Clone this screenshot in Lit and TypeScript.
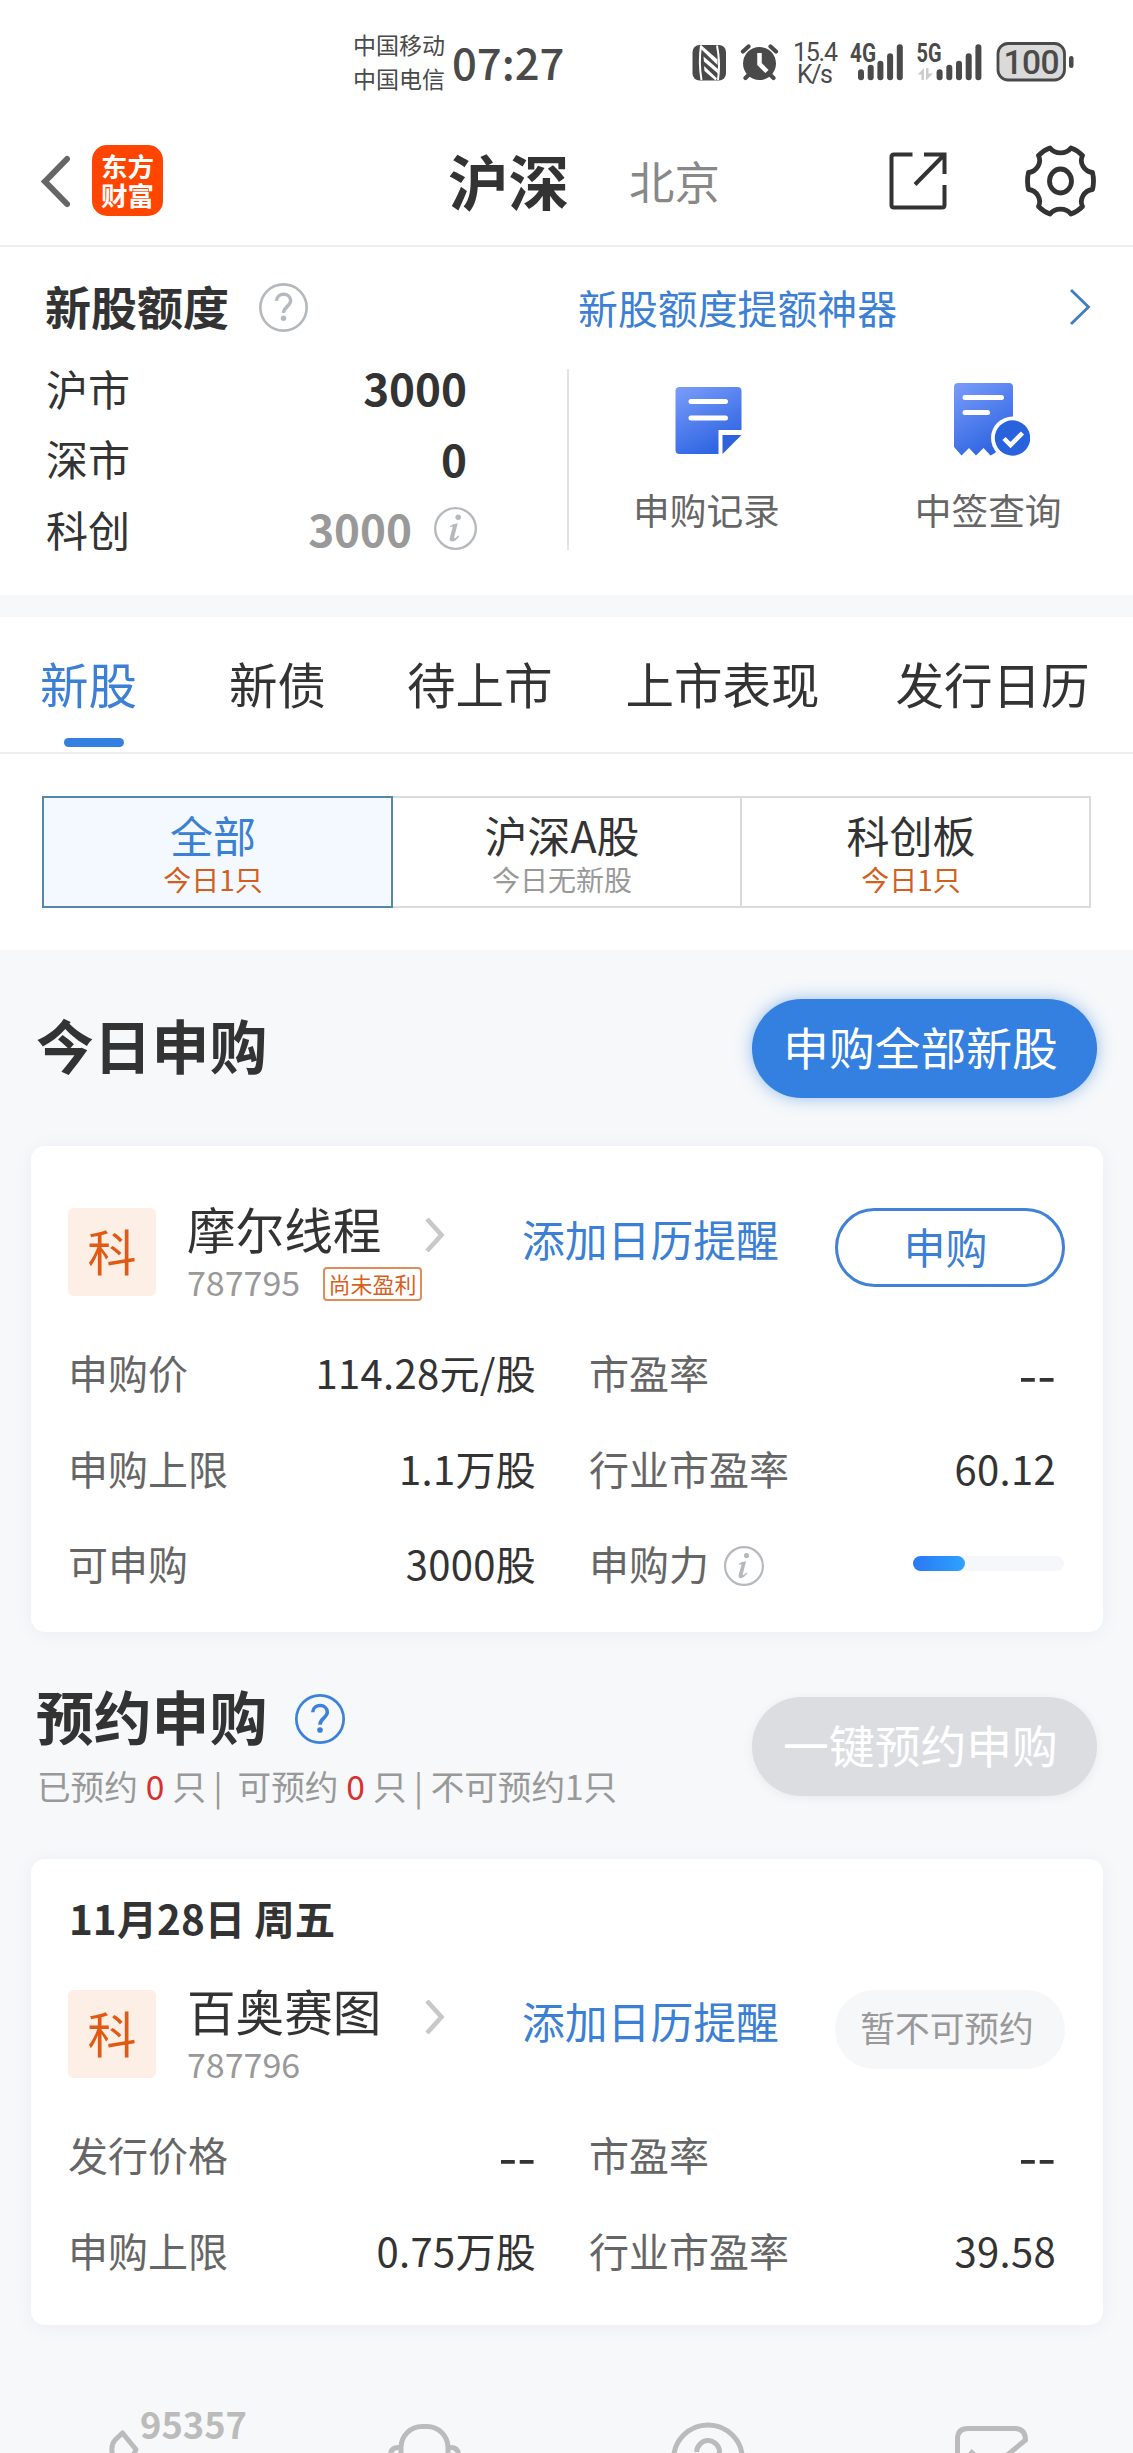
import { LitElement, html, css, svg, nothing } from "lit";
import { customElement, property } from "lit/decorators.js";

const font = css`"Noto Sans CJK SC", "Noto Sans", sans-serif`;

@customElement("round-mark")
class RoundMark extends LitElement {
  @property() kind = "help";
  @property({ type: Number }) size = 49;
  static styles = css`
    :host { display: block; flex: none; color: #b5b9be; }
    svg { display: block; }
  `;
  render() {
    return html`<svg width=${this.size} height=${this.size} viewBox="0 0 48 48" fill="none" stroke="currentColor">
      <circle cx="24" cy="24" r="22.7" stroke-width="2.6" />
      ${this.kind === "help"
        ? svg`<path d="M17 17.500C17.500 9 31 9 31 17.500C31 22.500 24 23.500 24 29.500" stroke-width="3.4"/><circle cx="24" cy="34.500" r="2.700" fill="currentColor" stroke="none"/>`
        : svg`<circle cx="27" cy="11.500" r="3.100" fill="currentColor" stroke="none"/><path d="M17.500 21.500Q21 18.600 26.500 18.200L22.600 33.500Q22.400 35.600 24 34.600L27 31.800 28 32.800Q23.500 38.800 19.800 38.600 16.600 38 17.800 33.600L20.800 23Q21.200 21 18.400 22.600Z" fill="currentColor" stroke="none"/>`}
    </svg>`;
  }
}

interface Cell { label: string; value?: string; bar?: number; info?: boolean; }
interface Stock { name: string; code: string; badge?: string; action: string; disabled?: boolean; date?: string; cells: Cell[]; }

@customElement("stock-card")
class StockCard extends LitElement {
  @property({ attribute: false }) stock!: Stock;
  static styles = css`
    :host { display: block; margin: 0 30px 0 31px; background: #fff; border-radius: 14px; box-shadow: 0 2px 20px rgba(40, 60, 90, 0.05); color: #333; }
    .date { height: 62px; line-height: 63px; padding: 27px 38px 42px 38px; font-size: 40.400px; font-weight: 700; }
    .head { display: flex; padding-left: 37px; height: 98px; }
    .plain { padding-top: 62px; }
    .tag { width: 88px; height: 88px; line-height: 83px; border-radius: 6px; background: #fdeee6; color: #e05a14; font-size: 49px; text-align: center; }
    .who { margin-left: 31px; width: 238px; }
    .name { font-size: 48.600px; line-height: 50px; height: 56px; margin-top: -5px; }
    .meta { display: flex; align-items: center; height: 44px; margin-top: 3px; font-size: 34px; color: #999; }
    .code { width: 136px; line-height: 40px; margin-top: -5px; }
    .badge { box-sizing: border-box; height: 34px; line-height: 28px; width: 99px; text-align: center; border: 2px solid #e58b58; border-radius: 4px; color: #d9601c; font-size: 22px; }
    .go { width: 20px; padding-top: 10px; }
    .remind { margin-left: 77px; font-size: 42.800px; line-height: 60px; color: #3b80d4; width: 313px; white-space: nowrap; }
    .act { box-sizing: border-box; width: 230px; height: 79px; line-height: 69px; padding-right: 9px; border: 3px solid #3f82d6; border-radius: 40px; color: #3b80d4; font-size: 42px; text-align: center; }
    .off { border-color: #f6f7f9; background: #f6f7f9; color: #999; font-size: 34.700px; padding-right: 6px; }
    .grid { display: grid; grid-template-columns: 467px 466px; column-gap: 54px; padding: 35px 0 4.500px 37px; grid-auto-rows: 95.500px; }
    .tall { padding-bottom: 11px; }
    .cell { display: flex; justify-content: space-between; align-items: center; height: 62px; font-size: 40px; line-height: 58px; }
    .label { display: flex; align-items: center; gap: 15px; color: #666; }
    .label round-mark { margin-top: 5px; }
    .value { letter-spacing: 0.3px; margin-right: -1px; }
    .none { font-size: 54px; margin-right: -1px; }
    .bar { width: 151px; height: 15px; margin: 0 -9px 0 0; border-radius: 8px; background: #f5f7fa; }
    .fill { height: 15px; border-radius: 8px; background: linear-gradient(90deg, #2a78f4, #2ea2ff); }
  `;
  render() {
    const s = this.stock;
    return html`
      ${s.date ? html`<div class="date">${s.date}</div>` : nothing}
      <div class="head ${s.date ? "" : "plain"}">
        <div class="tag">科</div>
        <div class="who">
          <div class="name">${s.name}</div>
          <div class="meta"><span class="code">${s.code}</span>${s.badge ? html`<span class="badge">${s.badge}</span>` : nothing}</div>
        </div>
        <svg class="go" width="20" height="34" viewBox="0 0 20 34" fill="none" stroke="#c8c8c8" stroke-width="4.600"><path d="M2 1 16.500 17 2 33"/></svg>
        <div class="remind">添加日历提醒</div>
        <div class="act ${s.disabled ? "off" : ""}">${s.action}</div>
      </div>
      <div class="grid ${s.date ? "tall" : ""}">
        ${s.cells.map((c) => html`<div class="cell">
          <span class="label">${c.label}${c.info ? html`<round-mark kind="info" .size=${40}></round-mark>` : nothing}</span>
          ${c.bar ? html`<div class="bar"><div class="fill" style="width:${c.bar}%"></div></div>` : html`<span class=${c.value === "--" ? "none" : "value"}>${c.value}</span>`}
        </div>`)}
      </div>`;
  }
}

const today: Stock = {
  name: "摩尔线程", code: "787795", badge: "尚未盈利", action: "申购",
  cells: [
    { label: "申购价", value: "114.28元/股" }, { label: "市盈率", value: "--" },
    { label: "申购上限", value: "1.1万股" }, { label: "行业市盈率", value: "60.12" },
    { label: "可申购", value: "3000股" }, { label: "申购力", info: true, bar: 34.5 },
  ],
};
const upcoming: Stock = {
  name: "百奥赛图", code: "787796", action: "暂不可预约", disabled: true, date: "11月28日 周五",
  cells: [
    { label: "发行价格", value: "--" }, { label: "市盈率", value: "--" },
    { label: "申购上限", value: "0.75万股" }, { label: "行业市盈率", value: "39.58" },
  ],
};

@customElement("app-root")
class AppRoot extends LitElement {
  static styles = css`
    :host { display: block; width: 1133px; height: 2453px; overflow: hidden; background: #f6f8fa; color: #333; font-family: ${font}; }
    svg { display: block; flex: none; }
    .status { display: flex; height: 124px; background: #fff; color: #4a4a4a; padding-left: 353px; }
    .carriers { font-size: 23px; line-height: 34px; padding-top: 27px; width: 99px; white-space: nowrap; }
    .time { font-size: 43.600px; font-weight: 500; line-height: 60px; padding-top: 31px; width: 240px; }
    .sysicons { padding-top: 40px; }
    .nav { display: flex; box-sizing: border-box; height: 123px; background: #fff; border-bottom: 2px solid #eee; padding: 21px 37px 0 41px; }
    .back { margin: 10px 22px 0 0; }
    .logo { box-sizing: border-box; width: 71px; height: 71px; padding: 6px 0 0; border-radius: 15px; background: #ff4500; color: #fff; font-size: 26.500px; line-height: 29px; font-weight: 700; text-align: center; }
    .market { margin-left: 285px; font-size: 60.500px; font-weight: 700; line-height: 69px; width: 181px; }
    .other { font-size: 45.400px; color: #888; line-height: 70px; width: 260px; }
    .share { margin: 7px 78px 0 0; }
    .quota { display: grid; grid-template-columns: 569px 564px; height: 348px; background: #fff; }
    .qtitle { display: flex; align-items: center; height: 68px; padding: 26px 0 0 45px; font-size: 46px; line-height: 60px; font-weight: 700; gap: 30px; }
    .qtitle span { margin-top: -5px; }
    .qlist { display: flex; flex-direction: column; box-sizing: border-box; margin-top: 28px; height: 181px; border-right: 2px solid #e3e3e3; padding-left: 46px; }
    .qrow { display: flex; align-items: center; flex: none; height: 70.500px; font-size: 42px; white-space: nowrap; }
    .qrow:first-child { margin-top: -17px; }
    .qnum { margin-left: auto; font-size: 44px; font-weight: 700; margin-right: 100px; }
    .locked { color: #999; margin-right: 22px; }
    .qinfo { margin-right: 90px; }
    .link { display: flex; align-items: center; height: 68px; padding: 26px 42px 0 9px; justify-content: space-between; font-size: 39.900px; color: #3b80d4; line-height: 60px; }
    .link span { margin-top: -1px; }
    .shortcuts { display: flex; margin-top: 27px; padding: 15px 0 0 64px; font-size: 36.700px; line-height: 52px; color: #666; }
    .short { display: flex; flex-direction: column; align-items: center; width: 147px; margin-right: 135px; }
    .short svg { margin-left: 8px; }
    .short span { margin-top: 26px; white-space: nowrap; }
    .band { height: 22px; background: #f6f8fa; }
    .tabs { display: flex; box-sizing: border-box; height: 137px; background: #fff; border-bottom: 2px solid #eee; padding: 28px 0 0 40px; font-size: 48.500px; line-height: 76px; }
    .tab { display: flex; flex-direction: column; align-items: center; white-space: nowrap; margin-right: 76px; }
    .tab:nth-child(1) { margin-right: 92px; }
    .tab:nth-child(2) { margin-right: 81px; }
    .tab:nth-child(3) { margin-right: 73px; }
    .on { color: #3b80d4; }
    .on::after { content: ""; width: 60px; height: 9px; margin: 17px 0 0 11px; border-radius: 5px; background: #3380e0; }
    .filters { background: #fff; padding: 42px 42px 42px; display: flex; }
    .filter { box-sizing: border-box; flex: 1; height: 112px; border: 2px solid #d8dadb; margin-left: -2px; padding: 9px 9px 0 0; text-align: center; font-size: 43px; line-height: 54px; }
    .filter:first-child { background: #f4f9ff; border-color: #5588a8; color: #3b80d4; margin-left: 0; z-index: 1; }
    .filter small { display: block; font-size: 28px; line-height: 30px; margin-top: 3px; color: #999; }
    .filter small.hot { color: #d2601c; }
    .section { display: flex; justify-content: space-between; padding: 0 36px 0 36px; }
    .first { height: 196px; }
    .h { font-size: 57.800px; font-weight: 700; line-height: 80px; white-space: nowrap; }
    .first .h { padding-top: 54px; }
    .cta { box-sizing: border-box; width: 345px; height: 99px; line-height: 94px; padding-right: 8px; margin-top: 49px; border-radius: 50px; background: #3380e0; color: #fff; font-size: 45.800px; text-align: center; white-space: nowrap; box-shadow: 0 0 16px rgba(51, 128, 224, 0.5); }
    .mute { margin-top: 65px; background: #dcdde1; box-shadow: 0 2px 12px rgba(0, 0, 0, 0.06); }
    .second { height: 227px; }
    .htitle { display: flex; align-items: center; gap: 28px; padding-top: 43px; height: 80px; }
    .htitle round-mark { color: #3b82dc; margin-top: 8px; }
    .sum { display: flex; margin: 8px 0 0 1px; font-size: 33.600px; line-height: 46px; color: #999; white-space: pre; }
    .sum b { font-weight: 400; color: #d9302f; margin: 0 8px; }
    .foot { margin-top: 84px; }
  `;

  statusIcons() {
    return html`<svg class="sysicons" width="385" height="50" viewBox="692 40 385 50" fill="#4a4a4a">
      <rect x="692.500" y="45" width="33.500" height="35.500" rx="7"/>
      <path d="M701 45.500Q698.500 63 701.500 80M717 45.500Q720.500 63 718 80" fill="none" stroke="#fff" stroke-width="2"/>
      <path d="M701 45 717.500 59.500V65L701 49ZM703.500 56.500 718 69V73.500L704 61.500ZM704 66 717 78.500 715.500 80.500 704.500 71Z" fill="#fff"/>
      <circle cx="759.500" cy="63.500" r="16.500"/>
      <path d="M743 51.500l5.500-5M776 51.500l-5.500-5M748.500 75l-3 3M770.500 75l3 3" stroke="#4a4a4a" stroke-width="4.200" stroke-linecap="round"/>
      <path d="M759.500 53v11l7.500 7.500" fill="none" stroke="#fff" stroke-width="4.500"/>
      <g font-family="Roboto, sans-serif">
        <text x="793" y="61" font-size="25" textLength="45">15.4</text>
        <text x="797" y="82.500" font-size="25" textLength="36">K/s</text>
        <g font-size="25" font-weight="700">
          <text x="850" y="62" textLength="26" lengthAdjust="spacingAndGlyphs">4G</text>
          <text x="916.500" y="62" textLength="25" lengthAdjust="spacingAndGlyphs">5G</text>
        </g>
      </g>
      ${[858, 936.6].map((x0) => svg`<g>${[11, 15.5, 19.5, 27, 36].map((h, i) =>
        svg`<rect x=${x0 + i * 9.7} y=${80.300 - h} width="6" height=${h} rx="3"/>`)}</g>`)}
      <path d="M917.500 74.500 924 68V80H921.500V74.500ZM926 68H928.500V73.500H933L926.500 80H926Z" fill="#ccc"/>
      <rect x="998" y="43.500" width="66.500" height="36.500" rx="10" fill="#dadada" stroke="#4a4a4a" stroke-width="2.800"/>
      <rect x="1069" y="56" width="4.500" height="12" rx="2.200"/>
      <text x="1003.500" y="73.500" font-size="33.500" font-weight="500" font-family="Roboto, sans-serif" textLength="56">100</text>
    </svg>`;
  }

  render() {
    return html`
      <div class="status">
        <div class="carriers">中国移动<br>中国电信</div>
        <div class="time">07:27</div>
        ${this.statusIcons()}
      </div>
      <div class="nav">
        <svg class="back" width="29" height="53" viewBox="0 0 29 53" fill="none" stroke="#666" stroke-width="6" stroke-linecap="round"><path d="M26 4 4 26.500 26 49"/></svg>
        <div class="logo">东方<br>财富</div>
        <div class="market">沪深</div>
        <div class="other">北京</div>
        <svg class="share" width="58" height="58" viewBox="0 0 58 58" fill="none" stroke="#333" stroke-width="4"><path d="M23.500 2.500H5Q2.500 2.500 2.500 5V53Q2.500 55.500 5 55.500H53Q55.500 55.500 55.500 53V33M35 2.500H55.500V22M54 4 26 32.500"/></svg>
        <svg width="71" height="72" viewBox="0 0 71 71" fill="none" stroke="#333" stroke-width="4.800" stroke-linejoin="round"><ellipse cx="35.500" cy="35.500" rx="11" ry="12"/><path d="M25 2.500C30 9 41 9 46 2.500Q52 4.500 57.500 10C54 17 59 26 67.500 27Q69.500 35.500 67.500 44C59 45 54 54 57.500 61Q52 66.500 46 68.500C41 62 30 62 25 68.500Q19 66.500 13.500 61C17 54 12 45 3.500 44Q1.500 35.500 3.500 27C12 26 17 17 13.500 10Q19 4.500 25 2.500Z"/></svg>
      </div>
      <div class="quota">
        <div>
          <div class="qtitle"><span>新股额度</span><round-mark></round-mark></div>
          <div class="qlist">
            <div class="qrow">沪市<span class="qnum">3000</span></div>
            <div class="qrow">深市<span class="qnum">0</span></div>
            <div class="qrow">科创<span class="qnum locked">3000</span><round-mark class="qinfo" kind="info" .size=${43}></round-mark></div>
          </div>
        </div>
        <div>
          <div class="link"><span>新股额度提额神器</span><svg width="22" height="36" viewBox="0 0 22 36" fill="none" stroke="#3f7dbf" stroke-width="2.800"><path d="M2 1 19.500 18 2 35"/></svg></div>
          <div class="shortcuts">
            <div class="short">
              <svg width="76" height="74" viewBox="-3.500 -4 76 74">
                <defs><linearGradient id="a" x1="0" y1="0" x2=".5" y2="1"><stop offset="0" stop-color="#7b9dfb"/><stop offset="1" stop-color="#2f65e2"/></linearGradient></defs>
                <path d="M4 0H62Q66 0 66 4V43H43V67H4Q0 67 0 63V4Q0 0 4 0Z" fill="url(#a)"/>
                <path d="M47 48H66L47 67Z" fill="#2c63dc"/>
                <path d="M15.500 14.500H50M15.500 31H50" stroke="#fff" stroke-width="5" stroke-linecap="round"/>
              </svg>
              <span>申购记录</span>
            </div>
            <div class="short">
              <svg width="76" height="74" viewBox="0 0 76 74">
                <defs><linearGradient id="b" x1="0" y1="0" x2=".5" y2="1"><stop offset="0" stop-color="#7b9dfb"/><stop offset="1" stop-color="#2f65e2"/></linearGradient></defs>
                <path d="M4 0H55Q59 0 59 4V64L44 66 41 70 36.500 72.500 29.500 65 22 72.500 15 65 7.500 72.500 0 64V4Q0 0 4 0Z" fill="url(#b)"/>
                <circle cx="58.500" cy="55" r="21.500" fill="#fff"/><circle cx="58.500" cy="55" r="17.700" fill="#2962dd"/>
                <path d="M11 14.500H47.500M11 29.500H33.500" stroke="#fff" stroke-width="5" stroke-linecap="round"/>
                <path d="M50 55.500 56.500 62 68.500 50" fill="none" stroke="#fff" stroke-width="4.500"/>
              </svg>
              <span>中签查询</span>
            </div>
          </div>
        </div>
      </div>
      <div class="band"></div>
      <div class="tabs">
        <div class="tab on">新股</div><div class="tab">新债</div><div class="tab">待上市</div><div class="tab">上市表现</div><div class="tab">发行日历</div>
      </div>
      <div class="filters">
        <div class="filter">全部<small class="hot">今日1只</small></div>
        <div class="filter">沪深A股<small>今日无新股</small></div>
        <div class="filter">科创板<small class="hot">今日1只</small></div>
      </div>
      <div class="section first"><div class="h">今日申购</div><div class="cta">申购全部新股</div></div>
      <stock-card .stock=${today}></stock-card>
      <div class="section second">
        <div>
          <div class="htitle"><span class="h">预约申购</span><round-mark .size=${50}></round-mark></div>
          <div class="sum">已预约<b>0</b>只 |  可预约<b>0</b>只 | 不可预约1只</div>
        </div>
        <div class="cta mute">一键预约申购</div>
      </div>
      <stock-card .stock=${upcoming}></stock-card>
      <svg class="foot" width="1133" height="44" viewBox="0 2409 1133 44" fill="none" stroke="#bbb" stroke-width="5">
        <text x="140" y="2438.500" font-size="37" font-weight="700" fill="#bbb" stroke="none" textLength="107" lengthAdjust="spacingAndGlyphs">95357</text>
        <path d="M113 2456Q110 2446 115 2440L122.500 2433 136 2449.500 133 2456" stroke-linejoin="round"/>
        <path d="M401 2456V2447A21 21 0 0 1 422 2426.500H427A21 21 0 0 1 448 2447V2456M390.500 2456Q390.500 2447.500 398 2447.500H401M458.500 2456Q458.500 2447.500 451 2447.500H448"/>
        <circle cx="708" cy="2459.500" r="34.500"/>
        <path d="M696.500 2452A11.700 12.500 0 0 1 719.500 2450Q719.500 2454 717 2457"/>
        <path d="M957.500 2456V2439Q957.500 2428.500 968 2428.500H1015Q1025.500 2429 1025.500 2440L1006 2456M970 2451 978 2458"/>
      </svg>`;
  }
}
